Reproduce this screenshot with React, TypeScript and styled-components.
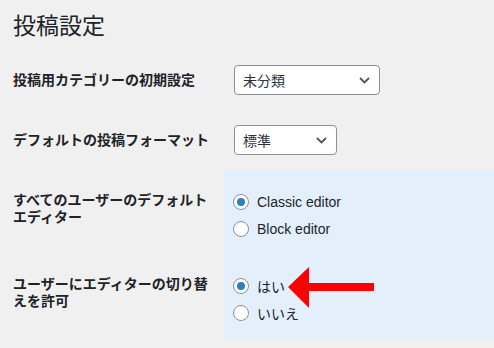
import styled, { createGlobalStyle } from "styled-components";

const GlobalStyle = createGlobalStyle`
  html, body {
    margin: 0;
    padding: 0;
    background: #f0f0f1;
  }
  body {
    color: #1d2327;
    font-family: "Liberation Sans", "Noto Sans CJK JP", sans-serif;
    font-size: 14px;
  }
`;

const Page = styled.div`
  width: 494px;
  height: 348px;
  overflow: hidden;
  background: #f0f0f1;
`;

const Title = styled.h1`
  margin: 0;
  padding: 9px 0 0 13px;
  height: 30px;
  font-family: "Noto Sans CJK JP", sans-serif;
  font-size: 23px;
  font-weight: 400;
  line-height: 30px;
  color: #1d2327;
`;

const Form = styled.div`
  margin-top: 11px;
  display: flex;
  flex-direction: column;
`;

const Row = styled.div`
  display: grid;
  grid-template-columns: 224px 1fr;
`;

const Label = styled.div`
  padding: 21px 11px 0 13px;
  font-family: "Noto Sans CJK JP", sans-serif;
  font-weight: 700;
  font-size: 14px;
  line-height: 17px;
  color: #1d2327;
`;

const Field = styled.div<{ $panel?: boolean; $pt: number; $pb: number }>`
  padding: ${(p) => p.$pt}px 10px ${(p) => p.$pb}px;
  background: ${(p) => (p.$panel ? "#e3f0fb" : "transparent")};
  position: relative;
`;

const SelectBox = styled.div<{ $w: number }>`
  box-sizing: border-box;
  width: ${(p) => p.$w}px;
  height: 30px;
  padding: 0 9px 0 8px;
  display: flex;
  align-items: center;
  justify-content: space-between;
  background: #fff;
  border: 1px solid #8c8f94;
  border-radius: 4px;
  font-family: "Noto Sans CJK JP", sans-serif;
  font-size: 14px;
  color: #2c3338;
`;

const Option = styled.label`
  height: 27px;
  display: flex;
  align-items: center;
  gap: 8px;
  margin-left: -1px;
  position: relative;
  font-size: 14px;
  color: #1d2327;
`;

const OptionText = styled.span`
  font-family: "Liberation Sans", "Noto Sans CJK JP", sans-serif;
`;

const Radio = styled.span<{ $checked?: boolean }>`
  box-sizing: border-box;
  width: 16px;
  height: 16px;
  border-radius: 50%;
  border: 1px solid #8c8f94;
  background: #fff;
  display: flex;
  align-items: center;
  justify-content: center;
  flex: none;

  &::after {
    content: "";
    width: 8px;
    height: 8px;
    border-radius: 50%;
    background: ${(p) => (p.$checked ? "#2f7fbf" : "transparent")};
  }
`;

const Arrow = styled.svg`
  position: absolute;
  left: 55px;
  top: -6px;
`;

function Chevron() {
  return (
    <svg width="11" height="7" viewBox="0 0 11 7">
      <path d="M1 1l4.5 4.5L10 1" fill="none" stroke="#50575e" strokeWidth="1.8" />
    </svg>
  );
}

function RadioOption({ label, checked, arrow }: { label: string; checked?: boolean; arrow?: boolean }) {
  return (
    <Option>
      <Radio $checked={checked} />
      <OptionText>{label}</OptionText>
      {arrow && (
        <Arrow width="90" height="44" viewBox="0 0 90 44">
          <polygon points="0,21 21,1 21,17 86,17 86,25 21,25 21,42" fill="#f00" />
        </Arrow>
      )}
    </Option>
  );
}

export default function App() {
  return (
    <Page>
      <GlobalStyle />
      <Title>投稿設定</Title>
      <Form>
        <Row>
          <Label>投稿用カテゴリーの初期設定</Label>
          <Field $pt={15} $pb={15}>
            <SelectBox $w={146}>
              <span>未分類</span>
              <Chevron />
            </SelectBox>
          </Field>
        </Row>
        <Row>
          <Label>デフォルトの投稿フォーマット</Label>
          <Field $pt={15} $pb={15}>
            <SelectBox $w={103}>
              <span>標準</span>
              <Chevron />
            </SelectBox>
          </Field>
        </Row>
        <Row>
          <Label>すべてのユーザーのデフォルトエディター</Label>
          <Field $panel $pt={18} $pb={12}>
            <RadioOption label="Classic editor" checked />
            <RadioOption label="Block editor" />
          </Field>
        </Row>
        <Row>
          <Label>ユーザーにエディターの切り替えを許可</Label>
          <Field $panel $pt={18} $pb={12}>
            <RadioOption label="はい" checked arrow />
            <RadioOption label="いいえ" />
          </Field>
        </Row>
      </Form>
    </Page>
  );
}
